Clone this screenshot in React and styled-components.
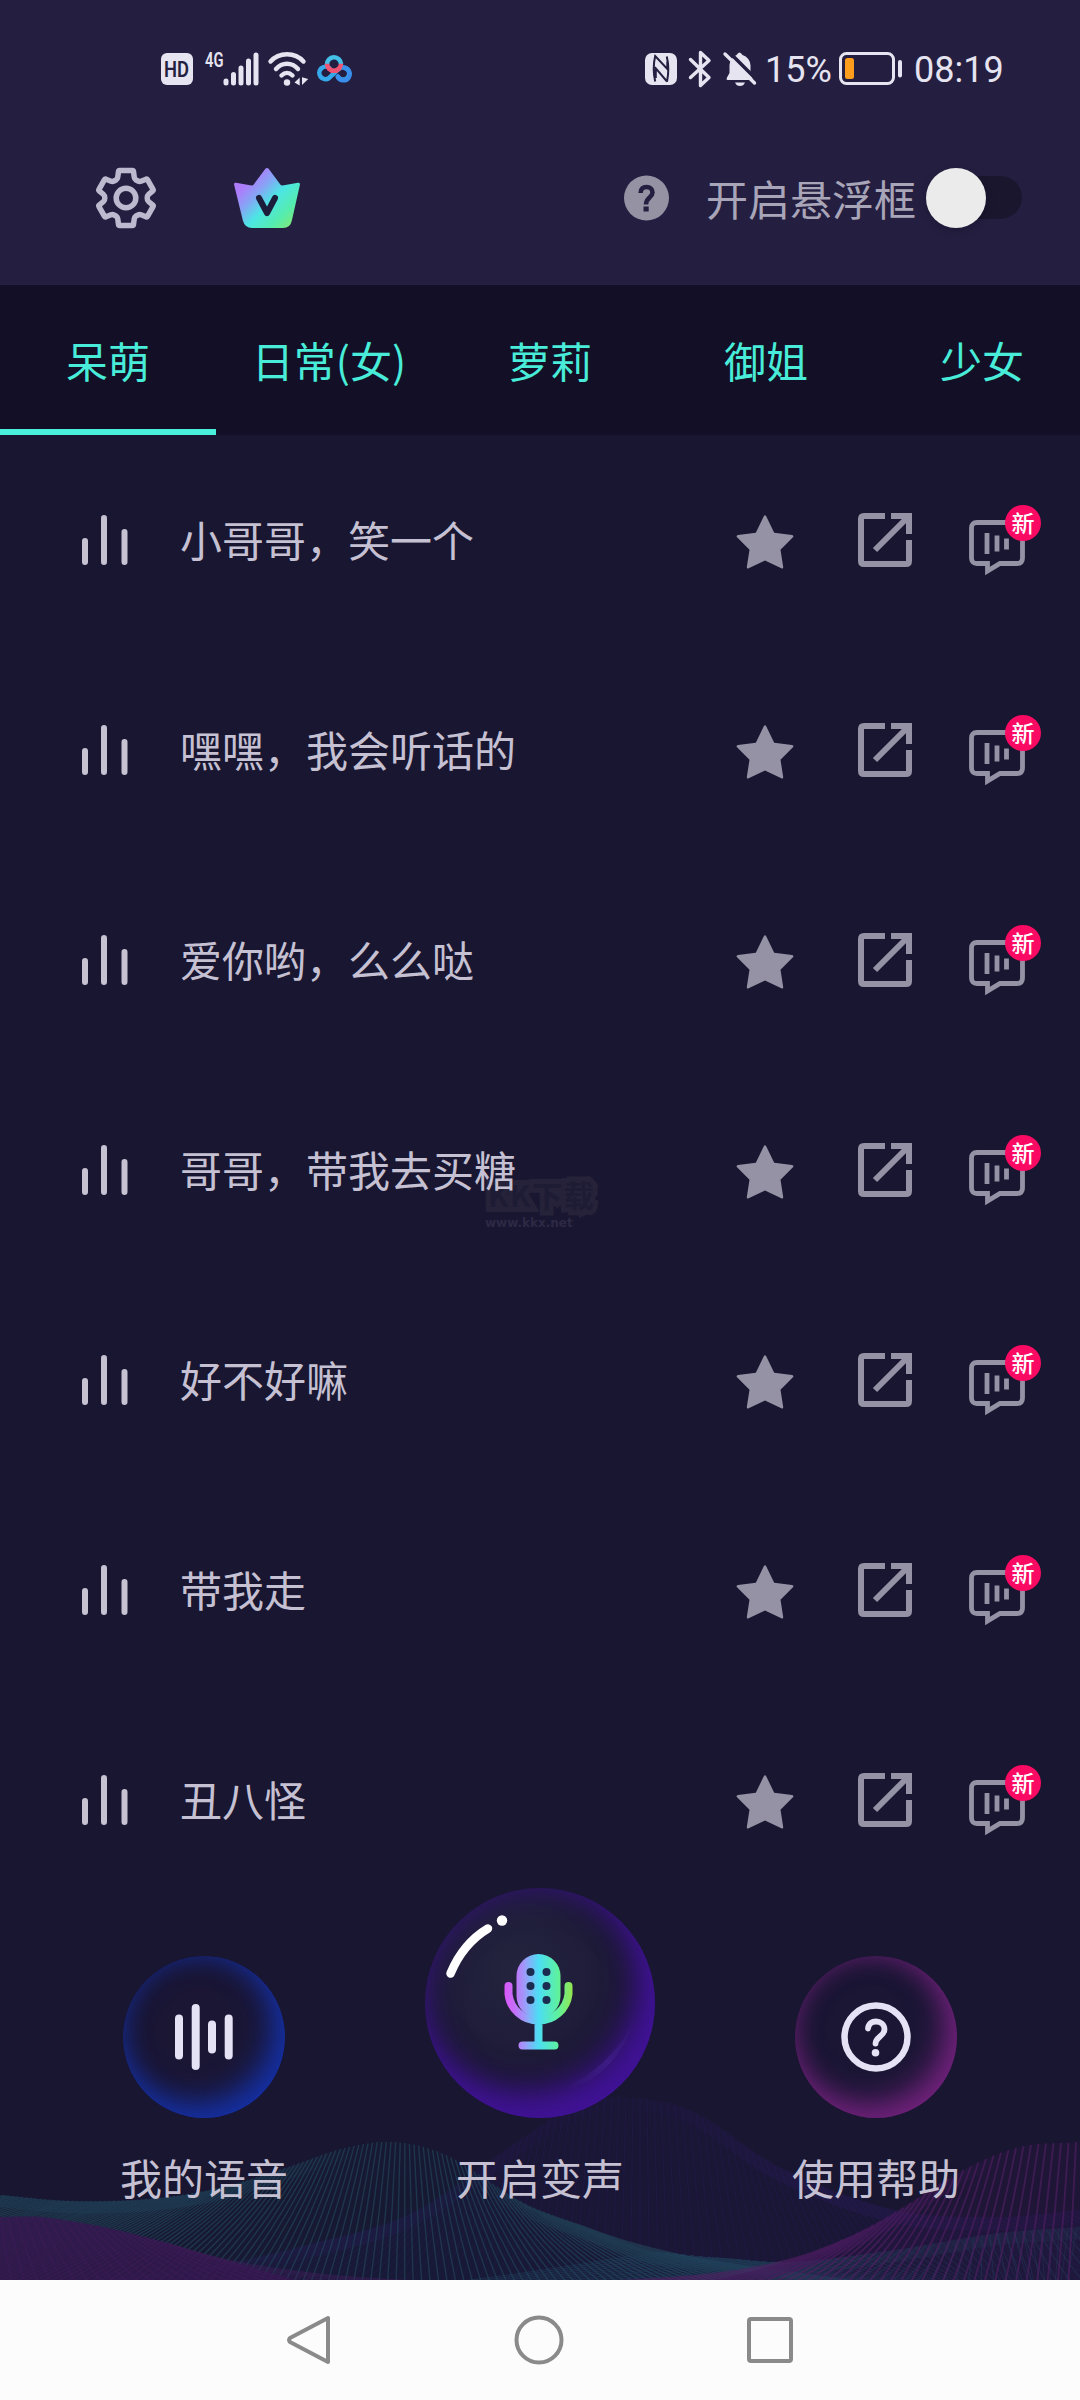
import React from "react";
import styled, { createGlobalStyle } from "styled-components";

const GlobalStyle = createGlobalStyle`
  *, *::before, *::after { box-sizing: border-box; }
  body {
    margin: 0;
    background: #191631;
    font-family: "Noto Sans CJK SC", "Noto Sans", sans-serif;
  }
  svg { display: block; flex: none; overflow: visible; }
`;

const INK = "#e6e4f0";
const MUTED = "#9592a5";

const Screen = styled.main`
  position: relative;
  isolation: isolate;
  width: 1080px;
  height: 2400px;
  display: flex;
  flex-direction: column;
  background: #191631;
  overflow: hidden;
`;

const Header = styled.header`
  height: 285px;
  background: #241f40;
`;

const StatusBar = styled.div`
  height: 137px;
  padding: 0 76px 0 161px;
  display: flex;
  justify-content: space-between;
  align-items: center;
  color: ${INK};
`;

const StatusGroup = styled.div`
  display: flex;
  align-items: center;
`;

const Spacer = styled.span`
  flex: none;
  width: ${(p) => p.$w}px;
`;

const HdBadge = styled.span`
  width: 32px;
  height: 32px;
  border-radius: 6px;
  background: ${INK};
  color: #241f40;
  display: flex;
  align-items: center;
  justify-content: center;
  font: 600 20px/32px Roboto, sans-serif;
  span { transform: scale(0.92, 1.08); }
`;

const NetworkLabel = styled.span`
  width: 18px;
  height: 34px;
  font: 600 21px/17px Roboto, sans-serif;
  span {
    display: inline-block;
    transform: scaleX(0.7);
    transform-origin: left;
  }
`;

const StatusText = styled.span`
  font: 400 36px/40px Roboto, sans-serif;
  width: ${(p) => p.$w}px;
  padding-top: 2px;
  white-space: nowrap;
`;

const Toolbar = styled.div`
  height: 121px;
  padding: 0 57px 0 96px;
  display: flex;
  align-items: center;
`;

const FloatLabel = styled.span`
  margin: 0 10px 0 37px;
  font-size: 42px;
  line-height: 60px;
  color: #a9a5b9;
  white-space: nowrap;
`;

const Track = styled.div`
  width: 87px;
  height: 43px;
  margin-left: 9px;
  border-radius: 22px;
  background: #1a162d;
  display: flex;
  align-items: center;
`;

const Thumb = styled.div`
  width: 60px;
  height: 60px;
  margin-left: -9px;
  flex: none;
  border-radius: 50%;
  background: #ebebeb;
  box-shadow: 0 3px 7px rgba(10, 6, 30, 0.28);
`;

const Tabs = styled.nav`
  height: 150px;
  display: flex;
  flex: none;
  background: #120f26;
  overflow: hidden;
`;

const Tab = styled.div`
  flex: none;
  width: ${(p) => (p.$wide ? 226 : 216)}px;
  padding-top: 6px;
  display: flex;
  align-items: center;
  justify-content: center;
  font-size: 42px;
  line-height: 60px;
  color: #48ecd8;
  border-bottom: 6px solid ${(p) => (p.$active ? "#4aefdc" : "transparent")};
  white-space: nowrap;
`;

const List = styled.section`
  height: 1452px;
  flex: none;
  overflow: hidden;
`;

const Row = styled.article`
  height: 210px;
  padding: 0 37px 0 82px;
  display: flex;
  align-items: center;
`;

const Phrase = styled.span`
  flex: 1;
  margin: 0 0 2px 52px;
  font-size: 42px;
  line-height: 60px;
  color: #c5c1d3;
`;

const Actions = styled.div`
  display: flex;
  align-items: center;
  > svg:first-child { margin-top: 3px; }
  > svg + svg { margin-left: 64px; }
`;

const ChatButton = styled.div`
  position: relative;
  width: 56px;
  margin: 16px 18px 0 57px;
`;

const NewBadge = styled.span`
  position: absolute;
  left: 36px;
  top: -15px;
  width: 36px;
  height: 36px;
  border-radius: 50%;
  background: #fb0a63;
  color: #fff;
  font-size: 23px;
  font-weight: 500;
  line-height: 34px;
  text-align: center;
`;

const Dock = styled.footer`
  position: relative;
  height: 393px;
  flex: none;
  padding: 0 36px 71px;
  display: grid;
  grid-template-columns: repeat(3, 336px);
  align-items: end;
`;

const Waves = styled.svg`
  position: absolute;
  left: 0;
  bottom: 0;
  overflow: hidden;
`;

const DockItem = styled.div`
  position: relative;
  display: flex;
  flex-direction: column;
  align-items: center;
`;

const glow = {
  blue: "inset -10px -13px 32px rgba(21,48,166,1), inset 0 0 26px rgba(22,43,140,.65)",
  purple: "inset -16px -25px 32px rgba(64,18,150,1), inset 0 0 32px rgba(58,18,137,.7)",
  pink: "inset -10px -13px 32px rgba(118,34,128,.95), inset 0 0 24px rgba(101,32,111,.6)",
};

const Orb = styled.div`
  width: ${(p) => p.$size}px;
  height: ${(p) => p.$size}px;
  border-radius: 50%;
  display: flex;
  align-items: center;
  justify-content: center;
  background: ${(p) =>
    p.$size > 200
      ? "radial-gradient(circle at 40% 36%, #24243f 0%, #1f1d39 35%, #1b1534 65%)"
      : "#1a1634"};
  box-shadow: ${(p) => glow[p.$tone]};
`;

const DockLabel = styled.span`
  margin: 29px 0 2px;
  font-size: 42px;
  line-height: 60px;
  height: 60px;
  color: #c5c1d3;
`;

const Watermark = styled.div`
  position: absolute;
  z-index: -1;
  left: 488px;
  top: 1175px;
  width: 130px;
  color: #1e1b35;
  font-size: 30px;
  font-weight: 700;
  line-height: 38px;
  letter-spacing: 1.5px;
  white-space: nowrap;
  -webkit-text-stroke: 10px #25223a;
  paint-order: stroke fill;
  small {
    display: block;
    margin-top: 3px;
    margin-left: -3px;
    font: 700 12px/14px "DejaVu Sans", sans-serif;
    letter-spacing: 0;
    color: #2d2944;
    -webkit-text-stroke: 0;
  }
`;

const NavBar = styled.div`
  height: 120px;
  flex: none;
  background: #fcfcfc;
  display: flex;
  align-items: center;
  justify-content: center;
  gap: 183px;
`;

const Signal = () => (
  <svg width="36" height="34" viewBox="0 0 36 34" stroke={INK} strokeWidth="5" strokeLinecap="round">
    <path d="M3 29v2M10.5 22.5v8.5M18 16v15M25.5 9v22M33 3v28" />
  </svg>
);

const Wifi = () => (
  <svg width="40" height="34" viewBox="0 0 40 34" fill="none" stroke={INK} strokeWidth="4.4" strokeLinecap="round">
    <path d="M2.5 9.5C11-0.2 27-0.2 35.5 9.5M8 17C14 10 24 10 30 17M13.5 23.5C17 20 21 20 24.5 23.5" />
    <circle cx="19" cy="30.5" r="3.2" fill={INK} stroke="none" />
    <path d="M26.5 30.5l5.2-5v8zM34 25.3l6.2 1.6-6.2 6.2z" fill={INK} stroke="none" />
  </svg>
);

const Cloud = () => (
  <svg width="36" height="28" viewBox="0 0 36 28" fill="none" strokeWidth="4.600">
    <path d="M13.500 13.200A6.200 6.200 0 1 0 12.800 23.200L22.500 14.200A6.200 6.200 0 1 1 22 22" stroke="#35a9ea" strokeLinecap="round" />
    <path d="M11 9.500A7 7 0 1 1 25 9" stroke="#43bfe8" />
    <path d="M11 8.800a7 7 0 0 0 14 0" stroke="#ef5472" />
    <path d="M28.500 13a6.200 6.200 0 1 1-6.800 8.500" stroke="#3a8fec" strokeLinecap="round" />
  </svg>
);

const Nfc = () => (
  <svg width="32" height="32" viewBox="0 0 32 32">
    <rect width="32" height="32" rx="7" fill={INK} />
    <path d="M10.2 28.5C8.3 20 8.3 11 10.2 3L22.3 16V8.5M22 28.5L9.8 14.2M21.8 3.5C23.7 11.5 23.7 20.5 22 28.8M10.8 16v9" fill="none" stroke="#241f40" strokeWidth="2" />
  </svg>
);

const Bluetooth = () => (
  <svg width="24" height="38" viewBox="0 0 24 38" fill="none" stroke={INK} strokeWidth="3.4" strokeLinecap="round" strokeLinejoin="round">
    <path d="M2.5 9.5L21 27.5l-8.5 8V2.5l8.5 8L2.5 27.5" />
  </svg>
);

const BellOff = () => (
  <svg width="34" height="36" viewBox="0 0 34 36">
    <path d="M8.5 8.5A11 11 0 0 1 13.5 4Q16.500-1 19.500 4A11 11 0 0 1 27.500 14.500V21L30 29H4.500Q3 29 4 26.500L6.500 22V14Q6.500 11 8.500 8.500Z" fill={INK} />
    <path d="M12 31.500H22Q20.500 35 17 35T12 31.500Z" fill={INK} />
    <path d="M4.500 -.5L34.500 29.500" stroke="#241f40" strokeWidth="3.500" />
    <path d="M2 3L31.500 32" stroke={INK} strokeWidth="3.400" strokeLinecap="round" />
  </svg>
);

const Battery = () => (
  <svg width="63" height="33" viewBox="0 0 63 33">
    <rect x="1.5" y="1.5" width="53" height="30" rx="6" fill="none" stroke={INK} strokeWidth="3" />
    <rect x="6" y="6" width="9" height="21" rx="2.500" fill="#ff9d1c" />
    <rect x="59" y="8" width="4" height="17.500" rx="2" fill={INK} />
  </svg>
);

const Gear = () => (
  <svg width="60" height="60" viewBox="0 0 60 60" fill="none" stroke="#bdb9ce" strokeWidth="5.500" strokeLinejoin="round">
    <path d="M22.500 3.500Q22.700 2.500 23.700 2.500H36.300Q37.300 2.500 37.500 3.500L38.300 9.500Q38.500 11 40 12L42 13Q43.500 13.800 45 13.200L50 11.200Q51 10.900 51.500 11.700L57 21.300Q57.500 22.200 56.800 22.800L52.500 26.500Q51.200 27.600 51.200 30T52.500 33.500L56.800 37.200Q57.500 37.800 57 38.700L51.500 48.300Q51 49.100 50 48.800L45 46.800Q43.500 46.200 42 47L40 48Q38.500 49 38.300 50.500L37.500 56.500Q37.300 57.500 36.300 57.500H23.700Q22.700 57.500 22.500 56.500L21.700 50.500Q21.500 49 20 48L18 47Q16.500 46.200 15 46.800L10 48.800Q9 49.100 8.500 48.300L3 38.700Q2.500 37.800 3.200 37.200L7.500 33.500Q8.800 32.400 8.800 30T7.500 26.500L3.200 22.800Q2.500 22.200 3 21.300L8.500 11.700Q9 10.900 10 11.200L15 13.200Q16.500 13.800 18 13L20 12Q21.500 11 21.700 9.500Z" />
    <circle cx="30" cy="30" r="9.800" />
  </svg>
);

const Crown = () => (
  <svg width="66" height="60" viewBox="0 0 66 60">
    <defs>
      <linearGradient id="crown" x1="8" y1="8" x2="60" y2="58" gradientUnits="userSpaceOnUse">
        <stop offset=".12" stopColor="#ad7cfb" />
        <stop offset=".32" stopColor="#86a5f5" />
        <stop offset=".53" stopColor="#4ce5e5" />
        <stop offset=".78" stopColor="#55ecaf" />
        <stop offset="1" stopColor="#83e873" />
      </linearGradient>
    </defs>
    <path d="M31 1.200Q33-1.200 35 1.200L46.500 16.800Q47.200 17.700 48.500 17.500L64 14.700Q66.300 14.500 65.900 16.800L58 52Q56.500 60 49 60H18Q11 60 9 53L.1 16.800Q-.3 14.500 2 14.700L17.500 17.500Q18.800 17.700 19.500 16.800Z" fill="url(#crown)" />
    <path d="M25 30L33 45L41 30" fill="none" stroke="#1c1d3b" strokeWidth="6" strokeLinecap="round" strokeLinejoin="round" />
  </svg>
);

const HelpSolid = () => (
  <svg width="45" height="45" viewBox="0 -0.5 45 45">
    <circle cx="22.500" cy="22.500" r="22.500" fill="#9492a3" />
    <path d="M16.600 17.500C16.600 13.500 19 11.500 22.500 11.500S28.500 13.700 28.500 17C28.500 22 22 22 22 29" fill="none" stroke="#241f40" strokeWidth="4.600" />
    <rect x="19.500" y="31" width="5.200" height="5" fill="#241f40" />
  </svg>
);

const Bars = () => (
  <svg width="46" height="50" viewBox="0 0 46 50" stroke="#c6c2d2" strokeWidth="6" strokeLinecap="round">
    <path d="M3 26v21M22 3v44M42.500 17v30" />
  </svg>
);

const Star = () => (
  <svg width="58" height="54" viewBox="0 0 58 54">
    <path d="M27.800 1.200Q29 -.8 30.200 1.200L38.200 17.800L56 20Q58.500 20.600 56.700 22.600L44.500 34.800L47.200 52Q47.300 54.200 45.300 53.300L29 45.500L12.700 53.300Q10.700 54.200 10.800 52L13.500 34.800L1.300 22.600Q-.5 20.600 2 20L19.800 17.800Z" fill={MUTED} />
  </svg>
);

const Share = () => (
  <svg width="54" height="54" viewBox="0 0 54 54" fill="none" stroke={MUTED} strokeWidth="6">
    <path d="M27 3H6Q3 3 3 6V48Q3 51 6 51H48Q51 51 51 48V27M33 3H51V21M51 3L17 37" />
  </svg>
);

const Chat = () => (
  <svg width="56" height="56" viewBox="0 0 56 56" fill="none" stroke={MUTED}>
    <path d="M8 2.500H48Q53.500 2.500 53.500 8V38Q53.500 43.500 48 43.500H31L18.500 51V43.500H8Q2.500 43.500 2.500 38V8Q2.500 2.500 8 2.500Z" strokeWidth="4.800" />
    <path d="M18 13v21M28 15.500v16M37.500 18.500v11" strokeWidth="4.800" />
  </svg>
);

const VoiceIcon = () => (
  <svg width="58" height="66" viewBox="0 0 58 66" stroke="#e4e2f4" strokeWidth="8" strokeLinecap="round">
    <path d="M4 14.500v37M20.700 4v58M37 20.500v25M53.700 14.500v37" />
  </svg>
);

const HelpIcon = () => (
  <svg width="70" height="70" viewBox="0 0 70 70" fill="none" stroke="#e4e2f4" strokeLinecap="round">
    <circle cx="35" cy="35" r="31.500" strokeWidth="6.500" />
    <path d="M27 26.500C27.500 21.500 31 19.500 35 19.500S43.500 22 43.500 27.500C43.500 34 34.500 35 34.500 41.500" strokeWidth="5.800" />
    <circle cx="34.500" cy="50.800" r="3.800" fill="#e4e2f4" stroke="none" />
  </svg>
);

const MicIcon = () => (
  <svg width="230" height="230" viewBox="1 1 230 230" fill="none">
    <defs>
      <linearGradient id="mic" x1="80" y1="0" x2="149" y2="0" gradientUnits="userSpaceOnUse">
        <stop offset="0" stopColor="#d957f8" />
        <stop offset=".14" stopColor="#c96bf8" />
        <stop offset=".3" stopColor="#9e9bfa" />
        <stop offset=".5" stopColor="#4cddf4" />
        <stop offset=".78" stopColor="#5df1a0" />
        <stop offset="1" stopColor="#96e64c" />
      </linearGradient>
      <linearGradient id="crescent" x1="140" y1="204" x2="212" y2="132" gradientUnits="userSpaceOnUse">
        <stop offset="0" stopColor="#4d2aa0" stopOpacity="0" />
        <stop offset=".5" stopColor="#4d2aa0" stopOpacity=".38" />
        <stop offset="1" stopColor="#4d2aa0" stopOpacity="0" />
      </linearGradient>
    </defs>
    <path d="M128 206Q190 196 211 132Q184 186 128 206Z" fill="url(#crescent)" />
    <path d="M26.500 86.500Q39 56.500 64 41.500" stroke="#fff" strokeWidth="8.500" strokeLinecap="round" />
    <circle cx="78" cy="33.500" r="5.200" fill="#fff" />
    <rect x="92.500" y="67" width="44" height="64" rx="22" fill="url(#mic)" />
    <path d="M84.500 99v8a30.200 30.200 0 0 0 60 0v-8M114.500 138v20M98.500 158.500h32" stroke="url(#mic)" strokeWidth="8" strokeLinecap="round" />
    <g fill="#1b2c50">
      {[85, 99, 113].map((y) => (
        <React.Fragment key={y}>
          <circle cx="106.500" cy={y} r="4" />
          <circle cx="122.500" cy={y} r="4" />
        </React.Fragment>
      ))}
    </g>
  </svg>
);

const RIDGES = {
  indigo: [[220, 2266], [300, 2247], [413, 2213], [516, 2143], [575, 2106], [620, 2097], [689, 2110], [778, 2167], [895, 2210], [999, 2217], [1080, 2210]],
  teal: [[0, 2195], [70, 2201], [150, 2199], [220, 2188], [286, 2168], [345, 2148], [396, 2142], [448, 2156], [523, 2203], [585, 2227], [654, 2252], [723, 2258], [792, 2262], [895, 2250], [999, 2233], [1080, 2227]],
  left: [[0, 2217], [41, 2217], [103, 2227], [160, 2241], [207, 2255], [296, 2280]],
  right: [[716, 2280], [792, 2260], [850, 2237], [895, 2213], [964, 2170], [1019, 2147], [1080, 2142]],
};

const ridgeY = (pts, x) => {
  let i = 0;
  while (i < pts.length - 2 && x > pts[i + 1][0]) i += 1;
  const p0 = pts[Math.max(0, i - 1)];
  const p1 = pts[i];
  const p2 = pts[i + 1];
  const p3 = pts[Math.min(pts.length - 1, i + 2)];
  const h = p2[0] - p1[0];
  const t = (x - p1[0]) / h;
  const m1 = ((p2[1] - p0[1]) / (p2[0] - p0[0])) * h;
  const m2 = ((p3[1] - p1[1]) / (p3[0] - p1[0])) * h;
  return (
    (2 * t ** 3 - 3 * t ** 2 + 1) * p1[1] +
    (t ** 3 - 2 * t ** 2 + t) * m1 +
    (-2 * t ** 3 + 3 * t ** 2) * p2[1] +
    (t ** 3 - t ** 2) * m2
  );
};

const ridgePath = (pts) => {
  const end = pts[pts.length - 1][0];
  let d = "";
  for (let x = pts[0][0]; x < end; x += 6) d += `${d ? "L" : "M"}${x} ${ridgeY(pts, x).toFixed(1)}`;
  return `${d}L${end} ${ridgeY(pts, end).toFixed(1)}`;
};

const ridgeArea = (pts) => `${ridgePath(pts)}L${pts[pts.length - 1][0]} 2290L${pts[0][0]} 2290Z`;

const strands = (pts, step, center, spread, lean = 0) => {
  let d = "";
  for (let x = pts[0][0]; x <= pts[pts.length - 1][0]; x += step) {
    const y = ridgeY(pts, x);
    const dx = (x - center) * spread + lean;
    d += `M${x.toFixed(1)} ${y.toFixed(1)}Q${(x + dx * 0.42).toFixed(1)} ${((y + 2282) / 2).toFixed(1)} ${(x + dx).toFixed(1)} 2282`;
  }
  return d;
};

const Band = ({ pts, color, width, opacity }) => (
  <path d={ridgePath(pts)} transform={`translate(0 ${width / 2})`} fill="none" stroke={color} strokeWidth={width} opacity={opacity} />
);

const WaveField = () => (
  <Waves width="1080" height="200" viewBox="0 2080 1080 200">
    <defs>
      <linearGradient id="tealBand" x1="0" y1="0" x2="1080" y2="0" gradientUnits="userSpaceOnUse">
        <stop offset="0" stopColor="#1e3c54" />
        <stop offset=".17" stopColor="#1e3c54" />
        <stop offset=".33" stopColor="#1e3c54" stopOpacity="0" />
        <stop offset=".43" stopColor="#1e3c54" stopOpacity="0" />
        <stop offset=".55" stopColor="#1e3c54" />
        <stop offset="1" stopColor="#1e3c54" stopOpacity=".5" />
      </linearGradient>
      <linearGradient id="indigoBand" x1="0" y1="0" x2="1080" y2="0" gradientUnits="userSpaceOnUse">
        <stop offset=".22" stopColor="#2c1d62" stopOpacity="0" />
        <stop offset=".32" stopColor="#2c1d62" />
        <stop offset=".47" stopColor="#2c1d62" stopOpacity=".4" />
        <stop offset=".58" stopColor="#2c1d62" stopOpacity="0" />
        <stop offset=".75" stopColor="#2c1d62" />
        <stop offset="1" stopColor="#2c1d62" stopOpacity=".6" />
      </linearGradient>
      <linearGradient id="magentaBand" x1="716" y1="0" x2="1000" y2="0" gradientUnits="userSpaceOnUse">
        <stop offset="0" stopColor="#42195a" />
        <stop offset=".5" stopColor="#42195a" />
        <stop offset="1" stopColor="#42195a" stopOpacity="0" />
      </linearGradient>
    </defs>
    <path d={ridgeArea(RIDGES.indigo)} fill="#27195a" opacity=".12" />
    <path d={strands(RIDGES.indigo, 7, 640, 0.35)} fill="none" stroke="#32206a" strokeWidth="1.200" opacity=".22" />
    <Band pts={RIDGES.indigo} color="url(#indigoBand)" width={13} opacity={0.28} />
    <path d={ridgeArea(RIDGES.teal)} fill="#14233a" opacity=".25" />
    <path d={strands(RIDGES.teal.slice(0, 11), 4.6, 405, 0.85)} fill="none" stroke="#23495c" strokeWidth="1.400" opacity=".6" />
    <path d={strands(RIDGES.teal.slice(10), 8, 950, 0.6, -20)} fill="none" stroke="#244b66" strokeWidth="1.200" opacity=".4" />
    <path d={strands(RIDGES.teal.slice(10), 9, 950, -0.4, 40)} fill="none" stroke="#244b66" strokeWidth="1" opacity=".35" />
    <Band pts={RIDGES.teal} color="url(#tealBand)" width={12} opacity={0.5} />
    <path d={ridgeArea(RIDGES.right)} fill="#35164c" opacity=".22" />
    <path d={strands(RIDGES.right, 7.5, 1080, 0.4, -6)} fill="none" stroke="#542064" strokeWidth="1.800" opacity=".6" />
    <Band pts={RIDGES.right} color="url(#magentaBand)" width={12} opacity={0.5} />
    <path d={ridgeArea(RIDGES.left)} fill="#35184f" opacity=".85" />
    <path d={strands(RIDGES.left, 8, 30, 0.6, 30)} fill="none" stroke="#451d5e" strokeWidth="1.200" opacity=".4" />
  </Waves>
);

const PHRASES = ["小哥哥，笑一个", "嘿嘿，我会听话的", "爱你哟，么么哒", "哥哥，带我去买糖", "好不好嘛", "带我走", "丑八怪"];
const TABS = ["呆萌", "日常(女)", "萝莉", "御姐", "少女"];

const PhraseRow = ({ text }) => (
  <Row>
    <Bars />
    <Phrase>{text}</Phrase>
    <Actions>
      <Star />
      <Share />
      <ChatButton>
        <Chat />
        <NewBadge>新</NewBadge>
      </ChatButton>
    </Actions>
  </Row>
);

const DockAction = ({ label, tone, size = 162, children }) => (
  <DockItem>
    <Orb $size={size} $tone={tone}>{children}</Orb>
    <DockLabel>{label}</DockLabel>
  </DockItem>
);

export default function App() {
  return (
    <Screen>
      <GlobalStyle />
      <Header>
        <StatusBar>
          <StatusGroup>
            <HdBadge><span>HD</span></HdBadge>
            <Spacer $w={12} />
            <NetworkLabel><span>4G</span></NetworkLabel>
            <Signal />
            <Spacer $w={9} />
            <Wifi />
            <Spacer $w={8} />
            <Cloud />
          </StatusGroup>
          <StatusGroup>
            <Nfc />
            <Spacer $w={11} />
            <Bluetooth />
            <Spacer $w={11} />
            <BellOff />
            <Spacer $w={8} />
            <StatusText $w={74}>15%</StatusText>
            <Battery />
            <Spacer $w={12} />
            <StatusText $w={90}>08:19</StatusText>
          </StatusGroup>
        </StatusBar>
        <Toolbar>
          <Gear />
          <Spacer $w={78} />
          <Crown />
          <Spacer $w={324} />
          <HelpSolid />
          <FloatLabel>开启悬浮框</FloatLabel>
          <Track><Thumb /></Track>
        </Toolbar>
      </Header>
      <Tabs>
        {TABS.map((t, i) => (
          <Tab key={t} $active={i === 0} $wide={i === 1}>{t}</Tab>
        ))}
      </Tabs>
      <List>
        {PHRASES.map((t) => <PhraseRow key={t} text={t} />)}
      </List>
      <Dock>
        <WaveField />
        <DockAction label="我的语音" tone="blue"><VoiceIcon /></DockAction>
        <DockAction label="开启变声" tone="purple" size={230}><MicIcon /></DockAction>
        <DockAction label="使用帮助" tone="pink"><HelpIcon /></DockAction>
      </Dock>
      <NavBar>
        <svg width="44" height="50" viewBox="0 0 44 50" fill="none" stroke="#8a8a8a" strokeWidth="4" strokeLinejoin="round">
          <path d="M41 3V47L3 27Q1 25 3 23Z" />
        </svg>
        <svg width="50" height="50" viewBox="0 0 50 50" fill="none" stroke="#8a8a8a" strokeWidth="4">
          <circle cx="25" cy="25" r="22.500" />
        </svg>
        <svg width="46" height="46" viewBox="0 0 46 46" fill="none" stroke="#8a8a8a" strokeWidth="4">
          <rect x="2" y="2" width="42" height="42" rx="2" />
        </svg>
      </NavBar>
      <Watermark>KK下载<small>www.kkx.net</small></Watermark>
    </Screen>
  );
}
